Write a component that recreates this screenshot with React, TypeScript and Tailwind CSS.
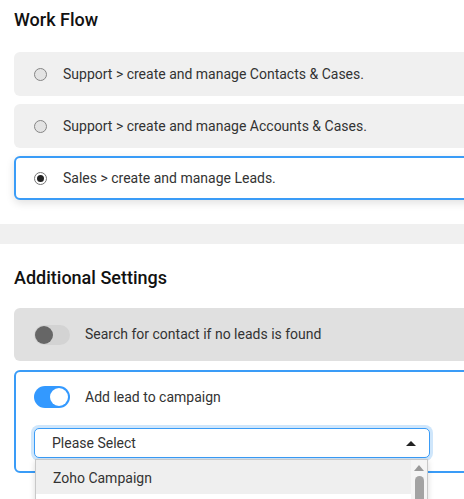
export default function App() {
  return (
    <div
      className="w-[464px] h-[499px] overflow-hidden bg-white text-[#333]"
      style={{ fontFamily: "Roboto, 'Liberation Sans', sans-serif" }}
    >
      <div className="w-[500px]">
        {/* Work flow */}
        <section className="pl-[14px] pt-[9px]">
          <h2 className="text-[18px] font-medium text-[#111] leading-[22px]">Work Flow</h2>
          <div className="mt-[21px] flex flex-col gap-[8px]">
            {[
              { label: "Support > create and manage Contacts & Cases.", on: false },
              { label: "Support > create and manage Accounts & Cases.", on: false },
              { label: "Sales > create and manage Leads.", on: true },
            ].map((o) => (
              <div
                key={o.label}
                className={
                  o.on
                    ? "h-[44px] flex items-center rounded-[6px] border-2 border-[#3a9cf7] bg-white shadow-[0_3px_8px_rgba(0,0,0,0.12)] pl-[18px]"
                    : "h-[44px] flex items-center rounded-[6px] bg-[#f0f0f0] pl-[20px]"
                }
              >
                <span
                  className={
                    o.on
                      ? "w-[13px] h-[13px] rounded-full border border-[#767676] bg-white flex items-center justify-center"
                      : "w-[13px] h-[13px] rounded-full border border-[#858585] bg-[#e3e3e3]"
                  }
                >
                  {o.on && <span className="w-[7px] h-[7px] rounded-full bg-[#222]" />}
                </span>
                <span className="ml-[16px] text-[14px] text-[#333]">{o.label}</span>
              </div>
            ))}
          </div>
        </section>

        <div className="mt-[24px] h-[20px] bg-[#f0f0f0]" />

        {/* Additional settings */}
        <section className="pl-[14px] pt-[23px]">
          <h2 className="text-[18px] font-medium text-[#111] leading-[22px]">Additional Settings</h2>
          <div className="mt-[19px] h-[53px] flex items-center rounded-[6px] bg-[#e0e0e0] pl-[20px]">
            <span className="w-[36px] h-[20px] rounded-full bg-[#d3d3d3] flex items-center pl-[1px]">
              <span className="w-[18px] h-[18px] rounded-full bg-[#666]" />
            </span>
            <span className="ml-[15px] text-[14px] text-[#333]">Search for contact if no leads is found</span>
          </div>

          <div className="relative mt-[9px] h-[103px] rounded-[6px] border-2 border-[#3a9cf7] bg-white pl-[18px] pt-[14px]">
            <div className="flex items-center">
              <span className="w-[36px] h-[22px] rounded-full bg-[#3399ff] flex items-center justify-end pr-[2px]">
                <span className="w-[18px] h-[18px] rounded-full bg-white" />
              </span>
              <span className="ml-[15px] text-[14px] text-[#333]">Add lead to campaign</span>
            </div>
            <div className="mt-[20px] w-[396px] h-[30px] rounded-[5px] border border-[#3a9cf7] shadow-[0_0_0_3px_#cfe6fb] flex items-center justify-between pl-[17px] pr-[13px] bg-white">
              <span className="text-[14px] text-[#333]">Please Select</span>
              <svg width="10" height="6" viewBox="0 0 10 6">
                <path d="M0 6 L5 1 L10 6 Z" fill="#222" />
              </svg>
            </div>

            {/* dropdown list */}
            <div className="absolute left-[19px] top-[87px] w-[393px] h-[60px] border border-[#c8c8c8] bg-white shadow-[0_2px_6px_rgba(0,0,0,0.15)] flex">
              <div className="flex-1">
                <div className="h-[34px] bg-[#efefef] flex items-center pl-[17px] pt-[2px] text-[14px] text-[#333]">
                  Zoho Campaign
                </div>
              </div>
              <div className="w-[16px] bg-[#f5f5f5] flex flex-col items-center pt-[4px]">
                <svg width="10" height="8" viewBox="0 0 10 8">
                  <path d="M0 7 L5 1 L10 7 Z" fill="#9a9a9a" />
                </svg>
                <span className="mt-[4px] w-[9px] h-[40px] rounded-full bg-[#a3a3a3]" />
              </div>
            </div>
          </div>
        </section>
      </div>
    </div>
  );
}
